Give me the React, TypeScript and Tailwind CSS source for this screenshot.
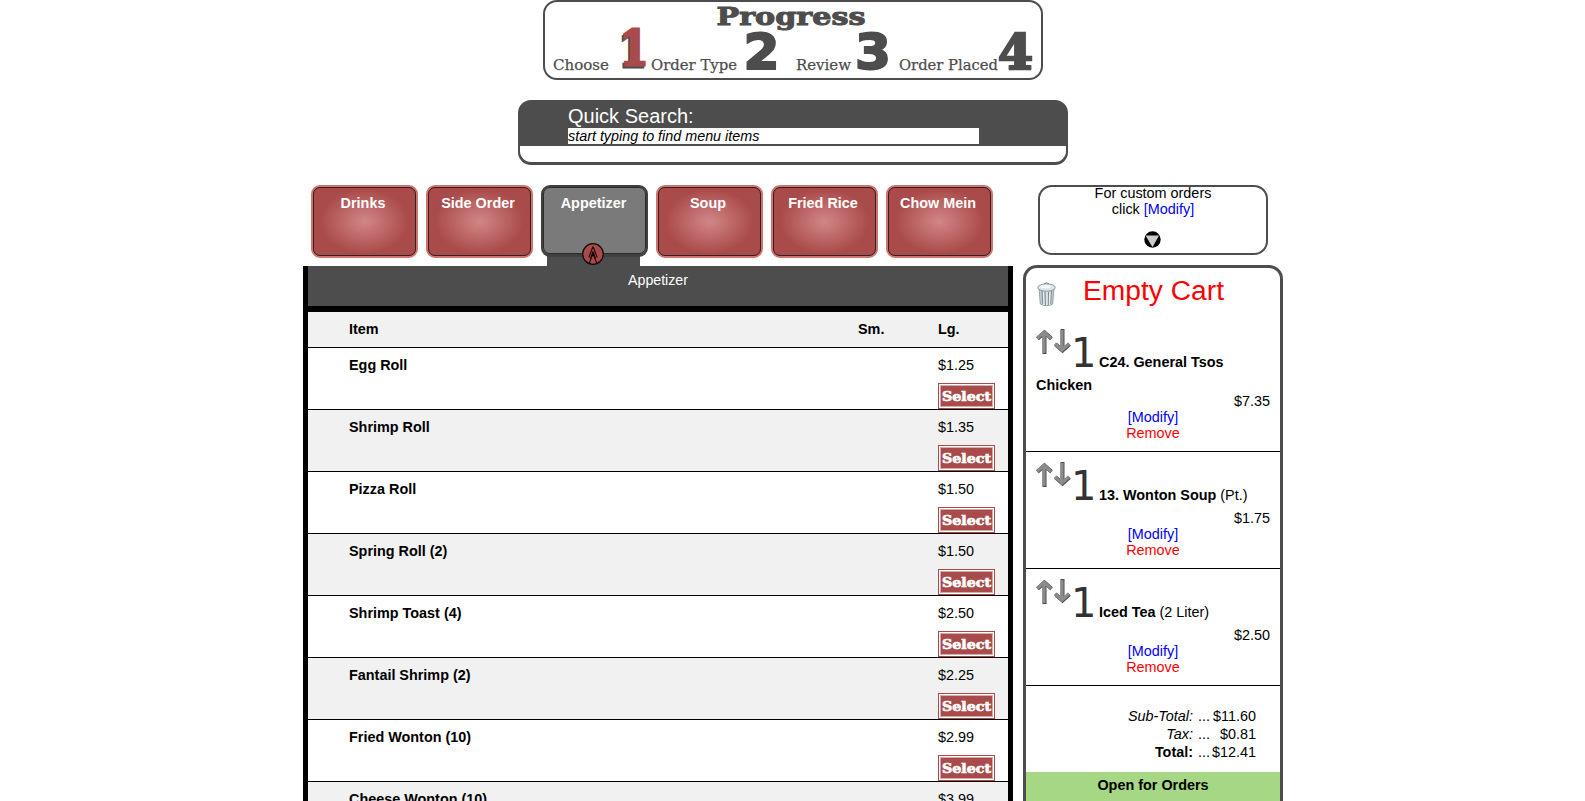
import React from "react";

const menu = [
  ["Egg Roll", "$1.25"],
  ["Shrimp Roll", "$1.35"],
  ["Pizza Roll", "$1.50"],
  ["Spring Roll (2)", "$1.50"],
  ["Shrimp Toast (4)", "$2.50"],
  ["Fantail Shrimp (2)", "$2.25"],
  ["Fried Wonton (10)", "$2.99"],
  ["Cheese Wonton (10)", "$3.99"],
];

const tabs = ["Drinks", "Side Order", "Appetizer", "Soup", "Fried Rice", "Chow Mein"];

const cart = [
  { lines: ["C24. General Tsos", "Chicken"], size: "", price: "$7.35" },
  { lines: ["13. Wonton Soup"], size: "(Pt.)", price: "$1.75" },
  { lines: ["Iced Tea"], size: "(2 Liter)", price: "$2.50" },
];

const totals = [
  ["Sub-Total:", "$11.60", "italic"],
  ["Tax:", "$0.81", "italic"],
  ["Total:", "$12.41", "font-bold"],
];

type WordProps = {
  x: number;
  y: number;
  w: number;
  size: number;
  heavy?: number;
  fill?: string;
  sans?: boolean;
  children: string;
};

function Word({ x, y, w, size, heavy = 0, fill = "#4d4d4d", sans = false, children }: WordProps) {
  return (
    <text
      x={x}
      y={y}
      fontSize={size}
      textLength={w}
      lengthAdjust="spacingAndGlyphs"
      fontFamily={sans ? "'DejaVu Sans', sans-serif" : "'DejaVu Serif', serif"}
      fontWeight={heavy ? 700 : 400}
      fill={fill}
      stroke={fill}
      strokeWidth={heavy || 0.25}
    >
      {children}
    </text>
  );
}

function Progress() {
  return (
    <div className="h-20 w-[500px] rounded-[14px] border-[2px] border-[#4d4d4d] bg-white">
      <svg className="-mt-[2px] -ml-[2px] block h-20 w-[500px]" viewBox="0 0 500 80">
        <Word x={173.5} y={24.5} w={149} size={24} heavy={1}>Progress</Word>
        <Word x={10} y={70} w={56} size={15.4}>Choose</Word>
        <Word x={75} y={67} w={29} size={49} heavy={3}>1</Word>
        <Word x={76.5} y={65} w={29} size={49} heavy={3} fill="#aa4b4b">1</Word>
        <Word x={108} y={70} w={86} size={15.4}>Order Type</Word>
        <Word x={200.5} y={69.2} w={36} size={49} heavy={2} sans>2</Word>
        <Word x={253} y={70} w={55} size={15.4}>Review</Word>
        <Word x={312} y={68.8} w={36} size={49} heavy={2} sans>3</Word>
        <Word x={356} y={70} w={99} size={15.4}>Order Placed</Word>
        <Word x={455} y={69} w={35} size={49} heavy={2.5}>4</Word>
      </svg>
    </div>
  );
}

function QuickSearch() {
  return (
    <div className="h-[65px] w-[550px] overflow-hidden rounded-[13px] bg-[#4d4d4d] px-[2px] pb-[3px]">
      <div className="h-[46px] pl-12 pt-[5px]">
        <div className="h-[23px] text-[20px] leading-[23px] text-white">Quick Search:</div>
        <div className="h-4 w-[411px] bg-white text-[14.35px] italic">start typing to find menu items</div>
      </div>
      <div className="h-[16px] rounded-b-[11px] bg-white" />
    </div>
  );
}

function Tab({ label }: { label: string }) {
  if (label === "Appetizer") {
    return (
      <div className="relative h-[81px] w-[107px]">
        <div className="absolute top-[66px] left-[6px] h-[15px] w-[93px] bg-[#4d4d4d]" />
        <div className="relative h-[72px] rounded-[9px] border-2 border-b-[3px] border-[#404040] bg-[#7a7a7a]">
          <div className="h-full rounded-[7px] border border-[#2b2b2b] pt-[7px] pr-[2px] text-center font-bold text-white">
            {label}
          </div>
        </div>
        <svg className="absolute top-[58px] left-[41px] h-[22px] w-[22px]" viewBox="0 0 22 22">
          <circle cx="11" cy="11" r="10.3" fill="#aa4b4b" stroke="#140808" strokeWidth="1.2" />
          <path
            d="M6.8 14.5 11 3.5l4.2 11M7.3 20 11 10.800l3.700 9.200M8.500 15.500 11 8.500l2.500 7"
            fill="none"
            stroke="#170707"
            strokeWidth="1.1"
            strokeLinejoin="bevel"
          />
        </svg>
      </div>
    );
  }
  return (
    <div className="h-[73px] w-[107px] rounded-[9px] border-2 border-[#cb7672] bg-[#aa4b4b]">
      <div className="h-full rounded-[7px] border border-[#3b1c1c] bg-[radial-gradient(ellipse_44px_32px_at_50%_50%,#d28686,#aa4b4b)] pt-[7px] pr-[3px] text-center font-bold text-white">
        {label}
      </div>
    </div>
  );
}

function SelectButton() {
  return (
    <div className="h-[26px] w-[57px] border border-[#aa4b4b] bg-white p-px">
      <svg className="block h-[22px] w-[53px] bg-[#aa4b4b]" viewBox="0 0 53 22">
        <rect x=".5" y=".5" width="52" height="21" fill="none" stroke="#d9a9a9" />
        <Word x={2} y={15.8} w={49} size={13.5} heavy={0.7} fill="#ffffff">Select</Word>
      </svg>
    </div>
  );
}

function Menu() {
  return (
    <div className="h-[535px] w-[710px] overflow-hidden border-x-[5px] border-black">
      <div className="h-[46px] border-b-[6px] border-black bg-[#4d4d4d] pt-[6px] text-center text-[14.2px] text-white">
        Appetizer
      </div>
      <div className="flex h-[36px] border-b border-black bg-[#f1f1f1] pt-[9px] pl-[41px] font-bold">
        <div className="w-[509px]">Item</div>
        <div className="w-[80px]">Sm.</div>
        <div>Lg.</div>
      </div>
      {menu.map(([name, price], i) => (
        <div
          key={name}
          className={`flex h-[62px] border-b border-black pt-[9px] pl-[41px] ${i % 2 ? "bg-[#f1f1f1]" : "bg-white"}`}
        >
          <div className="w-[589px] font-bold">{name}</div>
          <div>
            <div className="h-[26px]">{price}</div>
            <SelectButton />
          </div>
        </div>
      ))}
    </div>
  );
}

function CustomOrders() {
  return (
    <div className="flex h-[70px] w-[230px] flex-col items-center rounded-[14px] border-2 border-[#4d4d4d] text-center">
      <div className="-mt-[2px]">For custom orders</div>
      <div>
        click <span className="text-[#0000ff]">[Modify]</span>
      </div>
      <svg className="mt-[14px] mr-px block h-[17px] w-[17px] shrink-0" viewBox="0 0 17 17">
        <circle cx="8.5" cy="8.5" r="8.2" fill="#000" />
        <path d="M1.500 4.500h13.500L8.500 16.300z" fill="#ccc" />
      </svg>
    </div>
  );
}

function Trash() {
  return (
    <svg className="block h-[25px] w-[20px]" viewBox="0 0 20 25">
      <path d="M2 6h15l-1.300 16Q9.500 25.500 3.300 22z" fill="#c6ced3" stroke="#84929b" strokeWidth=".8" />
      <path d="M5 9l.8 13M8 10l.3 13M11.500 10l-.3 13M14.500 9l-.9 13" stroke="#7b8990" strokeWidth="1" />
      <path d="M6.500 10l.5 13M10 10v13M13 10l-.5 13" stroke="#f3f6f7" strokeWidth="1" />
      <ellipse cx="9.500" cy="5.500" rx="8.700" ry="3.700" fill="#dfe6e9" stroke="#84929b" strokeWidth=".9" />
      <ellipse cx="8.500" cy="4.500" rx="5.500" ry="1.700" fill="#f8fafa" />
      <path d="M7 2q2.500-2.500 5 0" fill="none" stroke="#788791" />
    </svg>
  );
}

function Arrows() {
  return (
    <svg className="mt-[10px] block h-[25px] w-[35px] shrink-0" viewBox="0 0 35 25">
      <g fill="none">
        <path d="M8.500 25V4M1.500 9.800l7-6.300 7 6.300" stroke="#4a4a4a" strokeWidth="4" />
        <path d="M26.500 0v21M19.500 15.200l7 6.300 7-6.300" stroke="#4a4a4a" strokeWidth="4" />
        <path d="M8 24V3.500M1 9.500l7-6.300 7 6.300" stroke="#8b8b8b" strokeWidth="3.200" />
        <path d="M26 1v20M19 14.700l7 6.300 7-6.300" stroke="#8b8b8b" strokeWidth="3.200" />
      </g>
    </svg>
  );
}

function CartItem({ lines, size, price }: { lines: string[]; size: string; price: string }) {
  return (
    <div className="border-b border-black px-[10px]">
      <div className="flex h-[58px]">
        <Arrows />
        <div className="mt-[5px] h-[53px] w-[24px] font-['DejaVu_Sans',sans-serif] text-[40px] leading-[58px] text-[#333]">
          1
        </div>
        <div className="mt-[35px] ml-[4px] h-4 whitespace-nowrap">
          <span className="font-bold">{lines[0]}</span> {size}
        </div>
      </div>
      {lines.slice(1).map((line) => (
        <div key={line} className="h-4 font-bold">
          {line}
        </div>
      ))}
      <div className="text-right">{price}</div>
      <div className="text-center text-[#0000ff]">[Modify]</div>
      <div className="h-[26px] text-center text-[#ff0000]">Remove</div>
    </div>
  );
}

function Cart() {
  return (
    <div className="h-[536px] w-[260px] overflow-hidden rounded-t-[14px] border-x-[3px] border-t-[3px] border-[#4d4d4d]">
      <div className="flex h-[51px] items-start pl-[11px]">
        <div className="pt-[14px]">
          <Trash />
        </div>
        <div className="ml-[26px] pt-[5px] text-[28.2px] leading-[34px] text-[#ff0000]">Empty Cart</div>
      </div>
      {cart.map((item) => (
        <CartItem key={item.lines[0]} {...item} />
      ))}
      <div className="h-[86px] pt-[21px] pr-[24px] leading-[18px]">
        {totals.map(([label, value, style]) => (
          <div key={label} className="flex h-[18px] justify-end">
            <span className={style}>{label}</span>
            <span className="ml-[5px]">...</span>
            <span className="w-[46px] text-right">{value}</span>
          </div>
        ))}
      </div>
      <div className="h-[30px] bg-[#a6d785] pt-[5px] text-center font-bold">Open for Orders</div>
    </div>
  );
}

export default function App() {
  return (
    <div className="h-[801px] w-[1585px] overflow-hidden bg-white font-['Liberation_Sans',Arial,sans-serif] text-[14.4px] leading-4 text-black">
      <div className="ml-[303px] flex w-[980px] flex-col items-center">
        <Progress />
        <div className="h-5" />
        <QuickSearch />
      </div>
      <div className="mt-5 ml-[303px] flex w-[980px] items-start justify-between">
        <div className="w-[710px]">
          <div className="flex h-[81px] gap-2 pl-2">
            {tabs.map((label) => (
              <Tab key={label} label={label} />
            ))}
          </div>
          <Menu />
        </div>
        <div className="flex w-[260px] flex-col items-center">
          <CustomOrders />
          <div className="h-[10px]" />
          <Cart />
        </div>
      </div>
    </div>
  );
}
